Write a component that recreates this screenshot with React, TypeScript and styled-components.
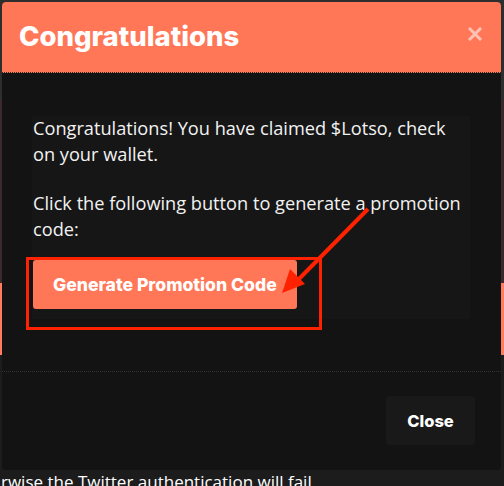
import React from "react";
import styled, { createGlobalStyle } from "styled-components";

const Global = createGlobalStyle`
  html, body { margin: 0; padding: 0; }
  body {
    width: 504px;
    height: 486px;
    overflow: hidden;
    background: #2c2c2c;
    font-family: "Open Sans", "Noto Sans", sans-serif;
  }
`;

const Page = styled.div`
  position: relative;
  width: 504px;
  height: 486px;
  display: flex;
  flex-direction: column;
  background: #1a1a1a;
`;

const PageTop = styled.div`
  height: 100px;
  background: #2e2e2e;
`;

const PageBrown = styled.div`
  height: 183px;
  background: #3a2a2c;
`;

const PageStripe = styled.div`
  height: 72px;
  background: #ff7d5e;
`;

const PageFill = styled.div`
  flex: 1;
  background: #1c1c1c;
  display: flex;
  align-items: flex-end;
`;

const PageText = styled.p`
  margin: 0 0 -6px 1px;
  color: #ffffff;
  font-size: 17px;
  line-height: 20px;
  white-space: nowrap;
`;

const Modal = styled.div`
  position: absolute;
  top: 2px;
  left: 2px;
  width: 499px;
  height: 468px;
  background: #131313;
  border-radius: 4px;
  display: flex;
  flex-direction: column;
  overflow: hidden;
`;

const Header = styled.div`
  height: 70px;
  flex-shrink: 0;
  background: #ff7757;
  border-bottom: 1px dotted #2a2a2a;
  display: flex;
  align-items: center;
  justify-content: space-between;
  padding: 0 19px 0 17px;
`;

const Title = styled.h1`
  margin: 0;
  color: #ffffff;
  font-family: "Inter", sans-serif;
  font-weight: 800;
  font-size: 27.5px;
  line-height: 1;
`;

const CloseX = styled.button`
  border: none;
  background: none;
  padding: 0;
  margin-top: -6px;
  width: 14px;
  height: 14px;
  opacity: 0.55;
  display: flex;
`;

const Body = styled.div`
  padding: 43px 31px 51px 30px;
  flex: 1;
`;

const Panel = styled.div`
  position: relative;
  background: #161616;
  padding: 0 0 10px 1px;
`;

const Text = styled.p<{ $gap?: number }>`
  margin: 0 0 ${(p) => p.$gap ?? 0}px 0;
  color: #f2f2f2;
  font-size: 18.2px;
  line-height: 25.5px;
`;

const ButtonWrap = styled.div`
  position: relative;
  margin-top: 18px;
  display: flex;
`;

const PrimaryButton = styled.button`
  height: 49px;
  padding: 0 20px;
  border: none;
  border-radius: 3px;
  background: #ff7757;
  color: #ffffff;
  font-family: "Inter", sans-serif;
  font-weight: 800;
  font-size: 17.6px;
`;

const Highlight = styled.div`
  position: absolute;
  left: -7px;
  top: -3px;
  width: 290px;
  height: 67px;
  border: 3px solid #ff2200;
  pointer-events: none;
`;

const Arrow = styled.svg`
  position: absolute;
  left: 0;
  top: 0;
  overflow: visible;
  pointer-events: none;
`;

const Footer = styled.div`
  border-top: 1px dotted #333333;
  padding: 24px 26px 25px;
  display: flex;
  justify-content: flex-end;
`;

const SecondaryButton = styled.button`
  width: 89px;
  height: 49px;
  border: none;
  border-radius: 3px;
  background: #191919;
  color: #ffffff;
  font-family: "Inter", sans-serif;
  font-weight: 800;
  font-size: 16.5px;
`;

export default function App() {
  return (
    <>
      <Global />
      <Page>
        <PageTop />
        <PageBrown />
        <PageStripe />
        <PageFill>
          <PageText>rwise the Twitter authentication will fail.</PageText>
        </PageFill>
        <Modal>
          <Header>
            <Title>Congratulations</Title>
            <CloseX aria-label="Close">
              <svg width="14" height="14" viewBox="0 0 14 14">
                <path d="M2 2 L12 12 M12 2 L2 12" stroke="#ffffff" strokeWidth="3" strokeLinecap="square" />
              </svg>
            </CloseX>
          </Header>
          <Body>
            <Panel>
              <Text $gap={24}>Congratulations! You have claimed $Lotso, check on your wallet.</Text>
              <Text>Click the following button to generate a promotion code:</Text>
              <ButtonWrap>
                <PrimaryButton>Generate Promotion Code</PrimaryButton>
                <Highlight />
              </ButtonWrap>
              <Arrow width="438" height="203" viewBox="0 0 438 203">
                <line x1="336" y1="93" x2="262" y2="168" stroke="#ff2200" strokeWidth="4" />
                <polygon points="250,177 258,153 273,168" fill="#ff2200" />
              </Arrow>
            </Panel>
          </Body>
          <Footer>
            <SecondaryButton>Close</SecondaryButton>
          </Footer>
        </Modal>
      </Page>
    </>
  );
}
